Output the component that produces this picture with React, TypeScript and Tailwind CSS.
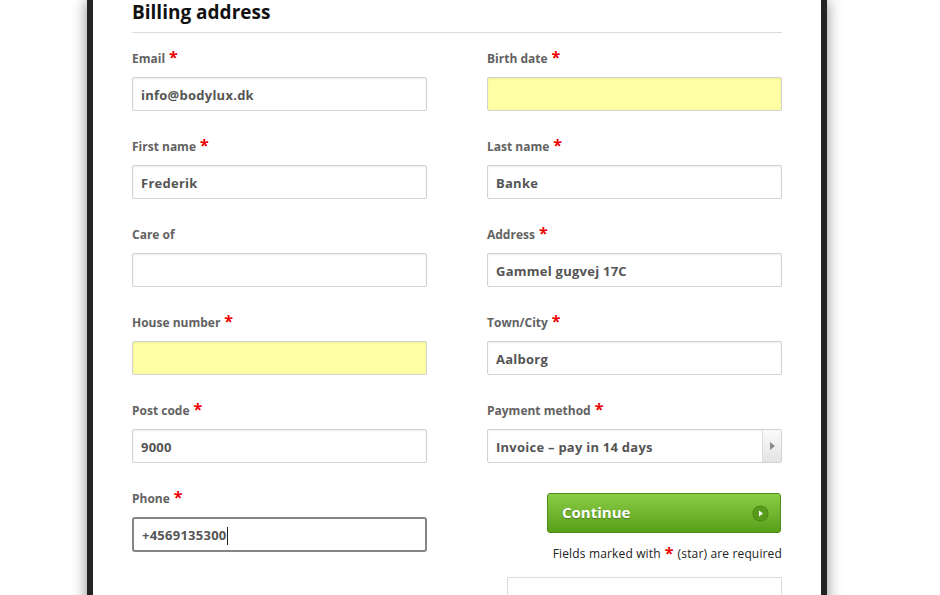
import React from "react";

const font = { fontFamily: '"Open Sans", "Liberation Sans", sans-serif' };

type Field = {
  label: string;
  required?: boolean;
  value?: string;
  yellow?: boolean;
};

const left: Field[] = [
  { label: "Email", required: true, value: "info@bodylux.dk" },
  { label: "First name", required: true, value: "Frederik" },
  { label: "Care of" },
  { label: "House number", required: true, yellow: true },
  { label: "Post code", required: true, value: "9000" },
];

const right: Field[] = [
  { label: "Birth date", required: true, yellow: true },
  { label: "Last name", required: true, value: "Banke" },
  { label: "Address", required: true, value: "Gammel gugvej 17C" },
  { label: "Town/City", required: true, value: "Aalborg" },
];

function Star() {
  return <span className="text-[#ee0000] text-[16px] font-bold leading-[16px] ml-[4px] -mt-[1px]">*</span>;
}

function Label({ text, required }: { text: string; required?: boolean }) {
  return (
    <div className="flex items-start h-[18px] mb-[9px] text-[12px] font-bold text-[#626262] whitespace-nowrap">
      <span className="leading-[18px]">{text}</span>
      {required && <Star />}
    </div>
  );
}

function TextField({ f }: { f: Field }) {
  return (
    <div className="h-[88px]">
      <Label text={f.label} required={f.required} />
      <input
        readOnly
        value={f.value ?? ""}
        className={
          "block w-full h-[34px] pl-[8px] pr-[8px] pt-[2px] rounded-[2px] border border-[#d2d2d2] shadow-[inset_0_1px_2px_rgba(0,0,0,0.08)] text-[13px] tracking-[0.25px] font-bold text-[#555] outline-none " +
          (f.yellow ? "bg-[#ffffa3]" : "bg-white")
        }
        style={font}
      />
    </div>
  );
}

export default function App() {
  return (
    <div className="h-[595px] overflow-hidden bg-white" style={font}>
      <div className="ml-[87px] w-[740px] h-[700px] border-x-[6px] border-[#232323] bg-white shadow-[0_0_14px_rgba(0,0,0,0.45)] px-[39px]">
        <h2 className="h-[33px] border-b border-[#dcdcdc] text-[19px] font-bold text-[#111] leading-[24px] pt-0">
          Billing address
        </h2>
        <div className="grid grid-cols-2 gap-x-[60px] pt-[17px]">
          <div>
            {left.map((f) => (
              <TextField key={f.label} f={f} />
            ))}
            <div className="h-[88px]">
              <Label text="Phone" required />
              <div className="flex items-center h-[35px] pl-[8px] pt-[3px] rounded-[3px] border-2 border-[#858585] bg-white text-[13px] tracking-[0.25px] font-bold text-[#555]">
                <span>+4569135300</span>
                <span className="w-px h-[18px] bg-[#222]" />
              </div>
            </div>
          </div>
          <div>
            {right.map((f) => (
              <TextField key={f.label} f={f} />
            ))}
            <div className="h-[88px]">
              <Label text="Payment method" required />
              <div className="flex h-[34px] rounded-[2px] border border-[#d2d2d2] bg-white shadow-[inset_0_1px_2px_rgba(0,0,0,0.06)]">
                <div className="flex-1 flex items-center pl-[8px] pt-[3px] text-[13px] tracking-[0.25px] font-bold text-[#555]">
                  Invoice – pay in 14 days
                </div>
                <div className="w-[19px] flex items-center justify-center border-l border-[#dcdcdc] bg-gradient-to-b from-[#fafafa] to-[#e4e4e4]">
                  <svg width="5" height="8" viewBox="0 0 5 8">
                    <path d="M0 0 L5 4 L0 8 Z" fill="#8a8a8a" />
                  </svg>
                </div>
              </div>
            </div>
            <div className="flex flex-col items-end pt-[3px]">
              <button
                className="w-[234px] h-[40px] mr-px flex items-center justify-between pl-[14px] pr-[11px] rounded-[3px] border border-[#4f8f17] bg-gradient-to-b from-[#8ccc45] to-[#58a018] text-white text-[15px] font-bold [text-shadow:0_1px_1px_rgba(0,0,0,0.3)]"
                style={font}
              >
                <span className="-mt-[1px]">Continue</span>
                <svg width="17" height="17" viewBox="0 0 17 17">
                  <circle cx="8.5" cy="8.5" r="8" fill="#4b8a12" />
                  <circle cx="8.5" cy="8.5" r="7" fill="#579a1c" />
                  <path d="M7 5.5 L11 8.5 L7 11.5 Z" fill="#ffffff" />
                </svg>
              </button>
              <div className="mt-[12px] text-[12px] tracking-[0.15px] text-[#222] leading-[18px] whitespace-nowrap">
                Fields marked with
                <span className="text-[#ee0000] text-[16px] font-bold leading-none mx-[4px] align-[-1px]">*</span>
                (star) are required
              </div>
              <div className="mt-[14px] w-[275px] h-[40px] border border-[#dcdcdc] bg-white" />
            </div>
          </div>
        </div>
      </div>
    </div>
  );
}
